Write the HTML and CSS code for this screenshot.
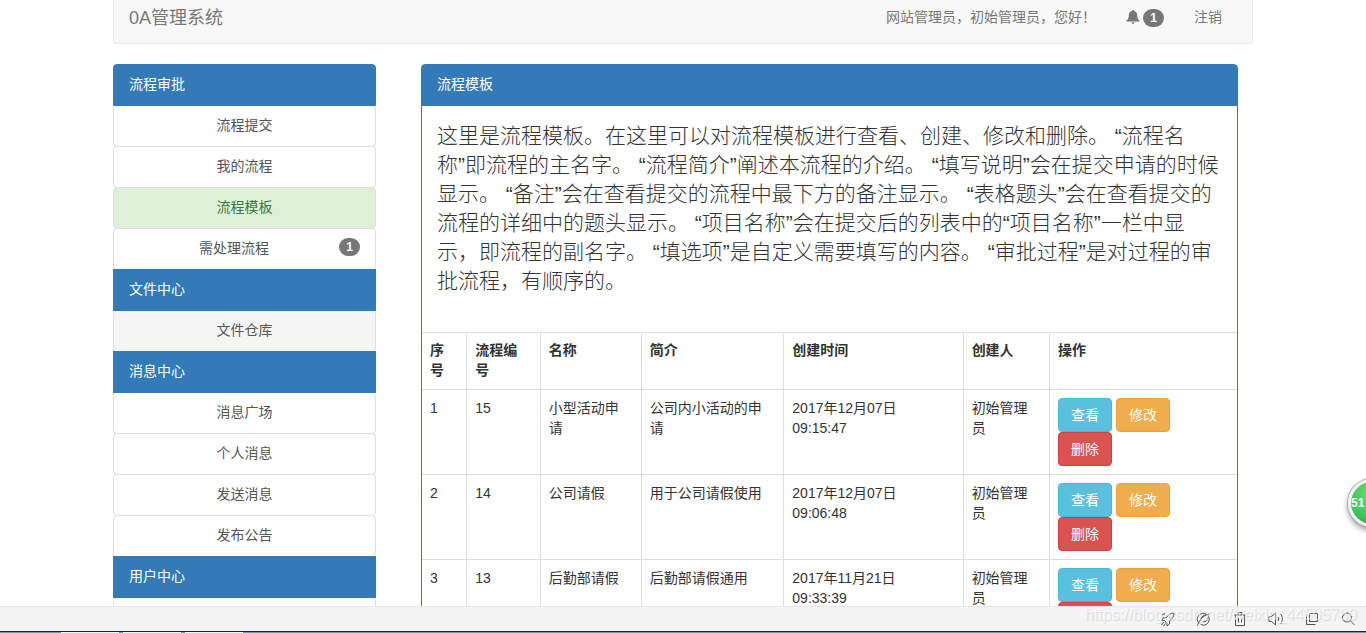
FILE: index.html
```html
<!DOCTYPE html>
<html lang="zh-CN">
<head>
<meta charset="utf-8">
<title>0A管理系统</title>
<link rel="stylesheet" href="styles.css">
</head>
<body>
<div class="viewport">
  <div class="container">
    <nav class="navbar">
      <a class="brand" href="#">0A管理系统</a>
      <div class="nav-right">
        <span class="nav-text">网站管理员，初始管理员，您好！</span>
        <a class="nav-link notice" href="#" aria-label="通知">
          <svg width="14" height="14" viewBox="0 0 14 14" fill="currentColor"><path d="M7 0c.7 0 1 .4 1 1 2.200.5 3.200 2 3.200 4 0 2.700.5 4 2.300 5.500v1H.5v-1C2.300 9 2.800 7.700 2.800 5c0-2 1-3.500 3.200-4 0-.6.3-1 1-1zM5.500 12.200h3c-.2 1.100-.8 1.500-1.500 1.500s-1.300-.4-1.500-1.500z"/></svg>
          <span class="badge">1</span>
        </a>
        <a class="nav-link" href="#">注销</a>
      </div>
    </nav>
    <div class="layout">
      <aside class="menu">
        <h2 class="menu-head">流程审批</h2>
        <a class="menu-item" href="#">流程提交</a>
        <a class="menu-item" href="#">我的流程</a>
        <a class="menu-item current" href="#">流程模板</a>
        <a class="menu-item with-badge" href="#"><span class="label">需处理流程</span><span class="badge">1</span></a>
        <h2 class="menu-head">文件中心</h2>
        <a class="menu-item hovered" href="#">文件仓库</a>
        <h2 class="menu-head">消息中心</h2>
        <a class="menu-item" href="#">消息广场</a>
        <a class="menu-item" href="#">个人消息</a>
        <a class="menu-item" href="#">发送消息</a>
        <a class="menu-item" href="#">发布公告</a>
        <h2 class="menu-head">用户中心</h2>
        <a class="menu-item" href="#">&nbsp;</a>
      </aside>
      <main class="panel">
        <h1 class="panel-head">流程模板</h1>
        <p class="lead">这里是流程模板。在这里可以对流程模板进行查看、创建、修改和删除。 “流程名<br>称”即流程的主名字。 “流程简介”阐述本流程的介绍。 “填写说明”会在提交申请的时候<br>显示。 “备注”会在查看提交的流程中最下方的备注显示。 “表格题头”会在查看提交的<br>流程的详细中的题头显示。 “项目名称”会在提交后的列表中的“项目名称”一栏中显<br>示，即流程的副名字。 “填选项”是自定义需要填写的内容。 “审批过程”是对过程的审<br>批流程，有顺序的。</p>
        <table class="table">
          <colgroup><col class="c-index"><col class="c-code"><col class="c-name"><col class="c-intro"><col class="c-time"><col class="c-author"><col></colgroup>
          <thead>
            <tr><th>序<br>号</th><th>流程编<br>号</th><th>名称</th><th>简介</th><th>创建时间</th><th>创建人</th><th>操作</th></tr>
          </thead>
          <tbody>
            <tr><td>1</td><td>15</td><td>小型活动申<br>请</td><td>公司内小活动的申<br>请</td><td>2017年12月07日<br>09:15:47</td><td>初始管理<br>员</td>
              <td><div class="actions"><button class="btn info">查看</button><button class="btn warning">修改</button><button class="btn danger">删除</button></div></td></tr>
            <tr><td>2</td><td>14</td><td>公司请假</td><td>用于公司请假使用</td><td>2017年12月07日<br>09:06:48</td><td>初始管理<br>员</td>
              <td><div class="actions"><button class="btn info">查看</button><button class="btn warning">修改</button><button class="btn danger">删除</button></div></td></tr>
            <tr><td>3</td><td>13</td><td>后勤部请假</td><td>后勤部请假通用</td><td>2017年11月21日<br>09:33:39</td><td>初始管理<br>员</td>
              <td><div class="actions"><button class="btn info">查看</button><button class="btn warning">修改</button><button class="btn danger">删除</button></div></td></tr>
          </tbody>
        </table>
      </main>
    </div>
  </div>
</div>
<footer class="statusbar">
  <div class="tools">
    <svg class="tool" viewBox="0 0 16 16"><path d="M14 2c-4 0-6 2-8 5L3 7 1.500 9.500l3 0 2.500 3 0 2.500L9.500 13l0-3C12 8 14 6 14 2zM4 11l-2.500 3M5.500 12.500l-2 2.500M2 4l3-1.500M9 6l1.500 1.500"/></svg>
    <svg class="tool" viewBox="0 0 16 16"><path d="M3 12.500A6 6 0 1 1 8 14.200 6 6 0 0 1 4.500 13M1.500 14.500C3 10 6 5 13 3M5 8c1-3 3-4 5-4M7 11c3 0 5-2 5-5"/></svg>
    <svg class="tool" viewBox="0 0 16 16"><path d="M2 4h12M3.500 4v10.500h9V4M6 4V1.500h4V4M6.500 7v4.500M9.500 7v4.500"/></svg>
    <svg class="tool" viewBox="0 0 16 16"><path d="M1 5.500h2.500L7.500 2v12L3.500 10.500H1zM10 6c1 1 1 3 0 4M12.500 3c2.500 2.500 2.500 7.500 0 10"/></svg>
    <svg class="tool" viewBox="0 0 16 16"><path d="M5.500 2.500h8v8h-8zM2.500 5.500v8h9"/></svg>
    <svg class="tool" viewBox="0 0 16 16"><circle cx="7" cy="6.500" r="4.500"/><path d="M10.500 10l4 4"/></svg>
  </div>
  <span class="watermark">https://blog.csdn.net/weixin_44505789</span>
</footer>
<div class="taskbar"><span class="task"></span><span class="task"></span><span class="task"></span></div>
<div class="bubble">51</div>
</body>
</html>
```

FILE: styles.css
```css
* { box-sizing: border-box; }
body {
  margin: 0;
  height: 100vh;
  display: flex;
  flex-direction: column;
  overflow: hidden;
  position: relative;
  background: #fff;
  color: #333;
  font: 14px/20px "Liberation Sans", "Noto Sans CJK SC", sans-serif;
}
a { color: inherit; text-decoration: none; }
.viewport { flex: 1; min-height: 0; overflow: hidden; }
.container { max-width: 1140px; margin: 0 auto; }

.navbar {
  display: flex;
  justify-content: space-between;
  align-items: flex-start;
  padding: 7px 30px 13px 15px;
  margin-bottom: 20px;
  background: #f8f8f8;
  border: 1px solid #e7e7e7;
  border-top: 0;
  border-radius: 0 0 4px 4px;
  color: #777;
}
.brand { font-size: 18px; line-height: 23px; }
.nav-right { display: flex; align-items: center; gap: 30px; }
.notice { display: flex; align-items: center; gap: 3px; }
.notice .badge { margin-top: 2px; }
.badge {
  display: block;
  min-width: 21px;
  padding: 3px 7px;
  border-radius: 10px;
  background: #777;
  color: #fff;
  font-size: 12px;
  line-height: 12px;
  font-weight: bold;
  text-align: center;
}

.layout {
  display: grid;
  grid-template-columns: 263px minmax(0, 1fr);
  gap: 45px;
  padding-right: 15px;
  align-items: start;
}
.menu { display: flex; flex-direction: column; }
.menu-head, .menu-item {
  margin: 0 0 -1px;
  padding: 9px 15px 11px;
  border: 1px solid #ddd;
  font-size: 14px;
  line-height: 20px;
  font-weight: normal;
}
.menu-head {
  position: relative;
  background: #337ab7;
  border-color: #337ab7;
  color: #fff;
}
.menu-head:first-child { border-radius: 4px 4px 0 0; }
.menu-item { border-radius: 4px; color: #555; text-align: center; background: #fff; }
.menu-item.current { background: #dff0d8; color: #3c763d; }
.menu-item.hovered { background: #f5f5f5; }
.with-badge { display: flex; align-items: flex-start; }
.with-badge .label { flex: 1; }

.panel { border: 1px solid #337ab7; border-radius: 4px 4px 0 0; }
.panel-head {
  margin: 0;
  padding: 9px 15px 12px;
  background: #337ab7;
  color: #fff;
  font-size: 14px;
  line-height: 20px;
  font-weight: normal;
}
.lead {
  margin: 0;
  padding: 15px 15px 37px;
  font-size: 21px;
  line-height: 29px;
  font-weight: 300;
}

.table { width: 100%; table-layout: fixed; border-collapse: collapse; }
.table th, .table td {
  padding: 8px;
  border: 1px solid #ddd;
  text-align: left;
  vertical-align: top;
  font-size: 14px;
  line-height: 20px;
}
.table th { padding: 7px 8px 9px; }
.table th:first-child, .table td:first-child { border-left: 0; }
.table th:last-child, .table td:last-child { border-right: 0; }
.c-index { width: 5.5%; }
.c-code { width: 9%; }
.c-name { width: 12.4%; }
.c-intro { width: 17.5%; }
.c-time { width: 22%; }
.c-author { width: 10.6%; }
.actions { display: flex; flex-wrap: wrap; column-gap: 4px; max-width: 120px; }
.btn {
  padding: 6px 12px;
  border: 1px solid;
  border-radius: 4px;
  color: #fff;
  font: inherit;
}
.info { background: #5bc0de; border-color: #46b8da; }
.warning { background: #f0ad4e; border-color: #eea236; }
.danger { background: #d9534f; border-color: #d43f3a; }

.statusbar {
  position: relative;
  display: flex;
  justify-content: flex-end;
  align-items: center;
  height: 25px;
  padding-right: 10px;
  background: #f4f4f4;
  border-top: 1px solid #e5e5e5;
}
.tools { display: flex; gap: 20px; }
.tool { width: 16px; height: 16px; fill: none; stroke: #555; stroke-width: 1; }
.watermark {
  position: absolute;
  right: 9px;
  top: -2px;
  color: rgba(255, 255, 255, .6);
  font-size: 16px;
  text-shadow: 1px 1px 1px rgba(0, 0, 0, .12);
}
.taskbar {
  display: flex;
  gap: 4px;
  height: 2px;
  padding-left: 61px;
  background: #8890a4;
  border-top: 1px solid #20242e;
}
.task { width: 58px; background: #f4f4f4; }
.bubble {
  position: absolute;
  right: -30px;
  top: 479px;
  width: 48px;
  height: 48px;
  border: 3px solid #f2f2f2;
  border-radius: 50%;
  background: radial-gradient(circle at 50% 30%, #6fe070, #3cc45c 65%, #1e8f4a);
  box-shadow: 0 0 0 1px #aaa, 0 3px 6px rgba(0, 0, 0, .45);
  color: #fff;
  font: bold 12px/42px "Liberation Sans", sans-serif;
}
```
